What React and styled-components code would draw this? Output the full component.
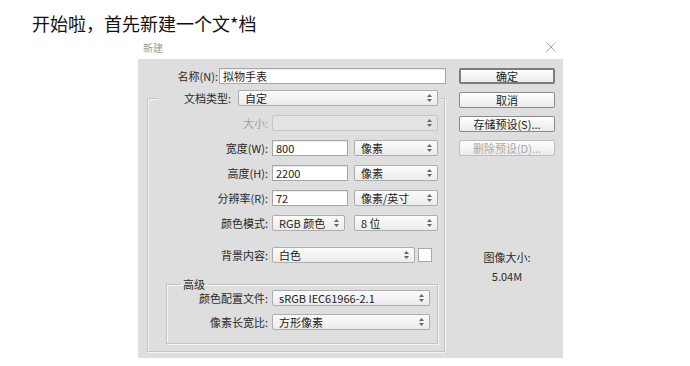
import styled, { createGlobalStyle } from 'styled-components';

const GlobalStyle = createGlobalStyle`
  body {
    margin: 0;
    background: #fff;
    font-family: "Noto Sans CJK SC", "Noto Sans", sans-serif;
  }
`

const Page = styled.div`
  width: 690px;
  height: 366px;
  overflow: hidden;
  background: #fff;
`
const Heading = styled.h1`
  margin: 0;
  padding: 11px 0 0 32px;
  font-size: 18px;
  font-weight: 400;
  line-height: 24px;
  color: #111;
`
const Dialog = styled.div`
  margin-left: 138px;
  width: 425px;
`
const TitleBar = styled.div`
  display: flex;
  justify-content: space-between;
  align-items: center;
  height: 24px;
  padding: 0 7px 0 5px;
  font-size: 10px;
  color: #9a9a9a;
`
const Panel = styled.div`
  display: flex;
  box-sizing: border-box;
  height: 299px;
  padding: 9px 8px 0 9px;
  background: #dedede;
`
const LeftCol = styled.div`
  display: flex;
  flex-direction: column;
  width: 299px;
`
const RightCol = styled.div`
  display: flex;
  flex-direction: column;
  gap: 8px;
  width: 96px;
  margin-left: 13px;
`
const Row = styled.div`
  display: flex;
  align-items: center;
  height: 16px;
  margin-top: ${p => p.$top || 0}px;
`
const Label = styled.label`
  box-sizing: border-box;
  width: ${p => p.$w}px;
  padding-right: ${p => p.$pr ?? 4}px;
  text-align: right;
  font-size: 11px;
  line-height: 16px;
  white-space: nowrap;
  color: ${p => (p.$disabled ? '#a2a2a2' : '#2a2a2a')};
`
const Input = styled.div`
  box-sizing: border-box;
  width: ${p => p.$w}px;
  height: 16px;
  padding-left: 3px;
  background: #fff;
  border: 1px solid #a6a6a6;
  box-shadow: inset 0 1px 1px rgba(0, 0, 0, 0.08);
  font-size: 11px;
  line-height: 14px;
  color: #222;
`
const Select = styled.div`
  box-sizing: border-box;
  display: flex;
  align-items: center;
  justify-content: space-between;
  width: ${p => p.$w}px;
  height: 16px;
  margin-left: ${p => p.$ml || 0}px;
  padding: 0 5px 0 6px;
  border: 1px solid ${p => (p.$disabled ? '#c6c6c6' : '#adadad')};
  border-radius: 2px;
  background: ${p => (p.$disabled ? '#e3e3e3' : 'linear-gradient(#fbfbfb, #ececec)')};
  font-size: 11px;
  line-height: 14px;
  color: #222;
  white-space: nowrap;
`
const Swatch = styled.div`
  width: 14px;
  height: 14px;
  margin-left: 3px;
  box-sizing: border-box;
  background: #fff;
  border: 1px solid #a8a8a8;
`
const OuterGroup = styled.fieldset`
  box-sizing: border-box;
  width: 298px;
  margin: 6px 0 0 0;
  padding: 0 0 7px 0;
  min-inline-size: 0;
  border: 1px solid #c4c4c4;
  box-shadow: inset 1px 1px 0 #f3f3f3, 1px 1px 0 #f3f3f3;
`
const OuterLegend = styled.legend`
  margin-left: 9px;
  padding: 0 2px 0 0;
  background: #dedede;
`
const LegendRow = styled.div`
  display: flex;
  align-items: center;
  height: 16px;
`
const InnerGroup = styled.fieldset`
  box-sizing: border-box;
  width: 272px;
  margin: 15px 0 0 18px;
  padding: 0 0 13px 0;
  min-inline-size: 0;
  border: 1px solid #c4c4c4;
  box-shadow: inset 1px 1px 0 #f3f3f3, 1px 1px 0 #f3f3f3;
`
const InnerLegend = styled.legend`
  margin-left: 13px;
  padding: 0 3px;
  font-size: 11px;
  line-height: 12px;
  color: #2a2a2a;
`
const Button = styled.div`
  box-sizing: border-box;
  height: 16px;
  text-align: center;
  font-size: 11px;
  line-height: ${p => (p.$primary ? 12 : 14)}px;
  color: ${p => (p.$disabled ? '#a8a8a8' : '#222')};
  background: linear-gradient(#fdfdfd, #ececec);
  border: ${p => (p.$primary ? '2px solid #7c7c7c' : `1px solid ${p.$disabled ? '#bdbdbd' : '#8c8c8c'}`)};
  border-radius: 2px;
`
const SizeInfo = styled.div`
  display: flex;
  flex-direction: column;
  gap: 5px;
  margin-top: 86px;
  text-align: center;
  font-size: 11px;
  line-height: 14px;
  color: #2a2a2a;
`

function Arrows() {
  return (
    <svg width="5" height="8" viewBox="0 0 5 8">
      <polygon points="0,3 2.5,0 5,3" fill="#666" />
      <polygon points="0,5 2.5,8 5,5" fill="#666" />
    </svg>
  )
}

function Close() {
  return (
    <svg width="10" height="10" viewBox="0 0 10 10">
      <path d="M0.5 0.5 L9.5 9.5 M9.5 0.5 L0.5 9.5" stroke="#a8a8a8" strokeWidth="1" />
    </svg>
  )
}

function Drop({ w, ml, disabled, children }) {
  return (
    <Select $w={w} $ml={ml} $disabled={disabled}>
      <span>{children}</span>
      <Arrows />
    </Select>
  )
}

function App() {
  return (
    <Page>
      <GlobalStyle />
      <Heading>开始啦，首先新建一个文*档</Heading>
      <Dialog>
        <TitleBar>
          <span>新建</span>
          <Close />
        </TitleBar>
        <Panel>
          <LeftCol>
            <Row>
              <Label $w={72} $pr={1}>名称(N):</Label>
              <Input $w={227}>拟物手表</Input>
            </Row>
            <OuterGroup>
              <OuterLegend>
                <LegendRow>
                  <Label $w={81} $pr={7}>文档类型:</Label>
                  <Drop w={200}>自定</Drop>
                </LegendRow>
              </OuterLegend>
              <Row $top={9}>
                <Label $w={124} $disabled>大小:</Label>
                <Drop w={166} disabled> </Drop>
              </Row>
              <Row $top={9}>
                <Label $w={124}>宽度(W):</Label>
                <Input $w={76}>800</Input>
                <Drop w={84} ml={6}>像素</Drop>
              </Row>
              <Row $top={9}>
                <Label $w={124}>高度(H):</Label>
                <Input $w={76}>2200</Input>
                <Drop w={84} ml={6}>像素</Drop>
              </Row>
              <Row $top={9}>
                <Label $w={124}>分辨率(R):</Label>
                <Input $w={76}>72</Input>
                <Drop w={84} ml={6}>像素/英寸</Drop>
              </Row>
              <Row $top={9}>
                <Label $w={124}>颜色模式:</Label>
                <Drop w={73}>RGB 颜色</Drop>
                <Drop w={84} ml={9}>8 位</Drop>
              </Row>
              <Row $top={16}>
                <Label $w={124}>背景内容:</Label>
                <Drop w={143}>白色</Drop>
                <Swatch />
              </Row>
              <InnerGroup>
                <InnerLegend>高级</InnerLegend>
                <Row>
                  <Label $w={105}>颜色配置文件:</Label>
                  <Drop w={158}>sRGB IEC61966-2.1</Drop>
                </Row>
                <Row $top={8}>
                  <Label $w={105}>像素长宽比:</Label>
                  <Drop w={158}>方形像素</Drop>
                </Row>
              </InnerGroup>
            </OuterGroup>
          </LeftCol>
          <RightCol>
            <Button $primary>确定</Button>
            <Button>取消</Button>
            <Button>存储预设(S)...</Button>
            <Button $disabled>删除预设(D)...</Button>
            <SizeInfo>
              <span>图像大小:</span>
              <span>5.04M</span>
            </SizeInfo>
          </RightCol>
        </Panel>
      </Dialog>
    </Page>
  )
}

export default App
